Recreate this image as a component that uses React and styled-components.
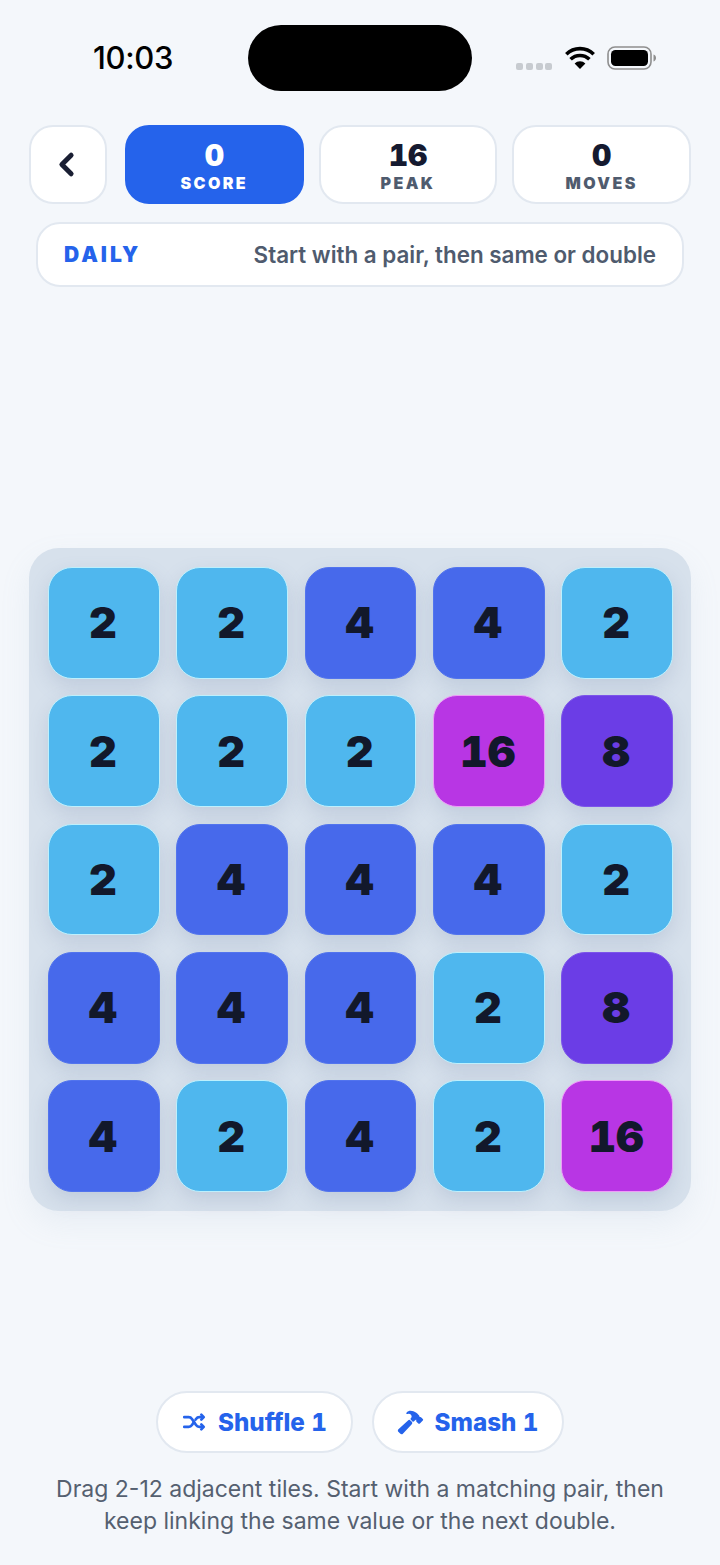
import styled, { createGlobalStyle } from 'styled-components';
import { IoChevronBack, IoShuffle, IoHammer } from 'react-icons/io5';

const GlobalStyle = createGlobalStyle`
  html, body {
    margin: 0;
    padding: 0;
    background: #f4f7fb;
    font-family: Inter, "Liberation Sans", sans-serif;
  }
  * { box-sizing: border-box; }
`

const Screen = styled.div`
  width: 720px;
  height: 1565px;
  overflow: hidden;
  background: #f4f7fb;
  display: flex;
  flex-direction: column;
`

const StatusBar = styled.div`
  height: 125px;
  flex: none;
  display: flex;
  align-items: flex-start;
`

const Time = styled.div`
  width: 266px;
  padding-top: 39px;
  text-align: center;
  font-size: 31px;
  line-height: 38px;
  font-weight: 500;
  letter-spacing: -0.3px;
  color: #000;
`

const Island = styled.div`
  width: 224px;
  height: 66px;
  margin: 25px 0 0 -18px;
  border-radius: 33px;
  background: #000;
`

const StatusIcons = styled.div`
  display: flex;
  align-items: flex-start;
  margin-left: 44px;
  padding-top: 46px;
`

const SignalDots = styled.div`
  display: flex;
  gap: 2.8px;
  margin-top: 17px;
  margin-right: 13px;
`

const SignalDot = styled.span`
  width: 7px;
  height: 7px;
  border-radius: 2px;
  background: #c7cbd0;
`

const TopRow = styled.div`
  display: flex;
  margin: 0 29px;
  height: 79px;
  flex: none;
`

const BackButton = styled.button`
  width: 78px;
  height: 79px;
  flex: none;
  margin-right: 18px;
  padding: 0 3px 0 0;
  display: flex;
  align-items: center;
  justify-content: center;
  background: #fff;
  border: 2px solid #e2e8f0;
  border-radius: 24px;
  color: #1a1f33;
  font-size: 33px;

  svg path {
    stroke-width: 76px;
  }
`

const StatRow = styled.div`
  flex: 1;
  display: grid;
  grid-template-columns: repeat(3, 1fr);
  gap: 15px;
`

const Stat = styled.div`
  display: flex;
  flex-direction: column;
  align-items: center;
  padding-top: 11px;
  border-radius: 24px;
  background: ${({ $active }) => ($active ? '#2563eb' : '#fff')};
  border: 2px solid ${({ $active }) => ($active ? '#2563eb' : '#e2e8f0')};
`

const StatValue = styled.div`
  font-size: 30px;
  line-height: 34px;
  font-weight: 900;
  font-variant-numeric: tabular-nums;
  color: ${({ $active }) => ($active ? '#fff' : '#151a30')};
`

const StatLabel = styled.div`
  margin-top: 1px;
  font-size: 16px;
  line-height: 20px;
  font-weight: 900;
  letter-spacing: 2.4px;
  color: ${({ $active }) => ($active ? '#fff' : '#4f5b6e')};
`

const ModeBar = styled.div`
  height: 65px;
  flex: none;
  margin: 18px 36px 0;
  padding: 0 26px;
  display: flex;
  align-items: center;
  justify-content: space-between;
  background: #fff;
  border: 2px solid #e2e8f0;
  border-radius: 24px;
`

const ModeName = styled.div`
  font-size: 21px;
  font-weight: 900;
  letter-spacing: 3px;
  color: #2563eb;
`

const ModeHint = styled.div`
  font-size: 22.4px;
  font-weight: 600;
  color: #4f5b6e;
`

const Board = styled.div`
  margin: 261px 29px 0;
  height: 663px;
  flex: none;
  padding: 19px 18px 19px 19px;
  display: grid;
  grid-template-columns: repeat(5, 1fr);
  grid-template-rows: repeat(5, 1fr);
  gap: 16.5px;
  background: #d7e1ec;
  border-radius: 30px;
  box-shadow: 0 12px 30px rgba(148, 170, 195, 0.12);
`

const tileColors = {
  2: { bg: '#4fb7ee', edge: '#bdf0fd' },
  4: { bg: '#4769eb', edge: '#5274ee' },
  8: { bg: '#6b3de6', edge: '#7c54ea' },
  16: { bg: '#b836e4', edge: '#ee9cf8' },
}

const Tile = styled.div`
  display: flex;
  align-items: center;
  justify-content: center;
  padding: 0 2px 1px 0;
  border-radius: 24px;
  border: 1px solid ${({ $value }) => tileColors[$value].edge};
  background: ${({ $value }) => tileColors[$value].bg};
  box-shadow: 0 8px 20px rgba(100, 120, 160, 0.2);
  font-size: 43px;
  font-weight: 900;
  font-variant-numeric: tabular-nums;
  color: #12182b;
`

const Tools = styled.div`
  margin-top: 180px;
  flex: none;
  display: flex;
  justify-content: center;
  gap: 19px;
  padding-right: 1px;
`

const ToolButton = styled.button`
  height: 62px;
  width: ${({ $width }) => $width}px;
  padding: 0;
  display: flex;
  align-items: center;
  justify-content: center;
  gap: ${({ $gap }) => $gap}px;
  background: #fff;
  border: 2px solid #e2e8f0;
  border-radius: 31px;
  font-family: inherit;
  font-size: 24.2px;
  font-weight: 800;
  font-variant-numeric: tabular-nums;
  color: #2563eb;
`

const ShuffleIcon = styled(IoShuffle)`
  path {
    stroke-width: 52px;
  }
`

const HelpText = styled.p`
  margin: 20px 0 0;
  text-align: center;
  font-size: 23px;
  line-height: 32px;
  color: #556070;
`

const BOARD = [
  [2, 2, 4, 4, 2],
  [2, 2, 2, 16, 8],
  [2, 4, 4, 4, 2],
  [4, 4, 4, 2, 8],
  [4, 2, 4, 2, 16],
]

const WifiIcon = () => (
  <svg width="30" height="23" viewBox="0 0 30 23">
    <path d="M15 23 9.6 17.4a7.6 7.6 0 0 1 10.800 0Z" fill="#000" />
    <path d="M5.600 13.300a13.400 13.400 0 0 1 18.800 0" fill="none" stroke="#000" strokeWidth="3.600" />
    <path d="M1.300 8.200a19.600 19.600 0 0 1 27.400 0" fill="none" stroke="#000" strokeWidth="3.600" />
  </svg>
)

const BatteryIcon = () => (
  <svg width="50" height="24" viewBox="0 0 50 24" style={{ marginLeft: 12 }}>
    <rect x="1" y="1" width="43" height="22" rx="7" fill="none" stroke="#8e8e8e" strokeWidth="1.6" />
    <rect x="4" y="4" width="37" height="16" rx="4.5" fill="#000" />
    <path d="M46.5 8.5c1.6.6 2.5 1.9 2.5 3.5s-.9 2.900-2.500 3.500Z" fill="#8e8e8e" />
  </svg>
)

const App = () => {
  return (
    <Screen>
      <GlobalStyle />
      <StatusBar>
        <Time>10:03</Time>
        <Island />
        <StatusIcons>
          <SignalDots>
            <SignalDot />
            <SignalDot />
            <SignalDot />
            <SignalDot />
          </SignalDots>
          <WifiIcon />
          <BatteryIcon />
        </StatusIcons>
      </StatusBar>

      <TopRow>
        <BackButton aria-label="Back">
          <IoChevronBack />
        </BackButton>
        <StatRow>
          <Stat $active>
            <StatValue $active>0</StatValue>
            <StatLabel $active>SCORE</StatLabel>
          </Stat>
          <Stat>
            <StatValue>16</StatValue>
            <StatLabel>PEAK</StatLabel>
          </Stat>
          <Stat>
            <StatValue>0</StatValue>
            <StatLabel>MOVES</StatLabel>
          </Stat>
        </StatRow>
      </TopRow>

      <ModeBar>
        <ModeName>DAILY</ModeName>
        <ModeHint>Start with a pair, then same or double</ModeHint>
      </ModeBar>

      <Board>
        {BOARD.flat().map((value, i) => (
          <Tile key={i} $value={value}>{value}</Tile>
        ))}
      </Board>

      <Tools>
        <ToolButton $width={197} $gap={11}>
          <ShuffleIcon size={26} />
          Shuffle 1
        </ToolButton>
        <ToolButton $width={192} $gap={11}>
          <IoHammer size={27} />
          Smash 1
        </ToolButton>
      </Tools>

      <HelpText>
        Drag 2-12 adjacent tiles. Start with a matching pair, then
        <br />
        keep linking the same value or the next double.
      </HelpText>
    </Screen>
  );
};

export default App;
